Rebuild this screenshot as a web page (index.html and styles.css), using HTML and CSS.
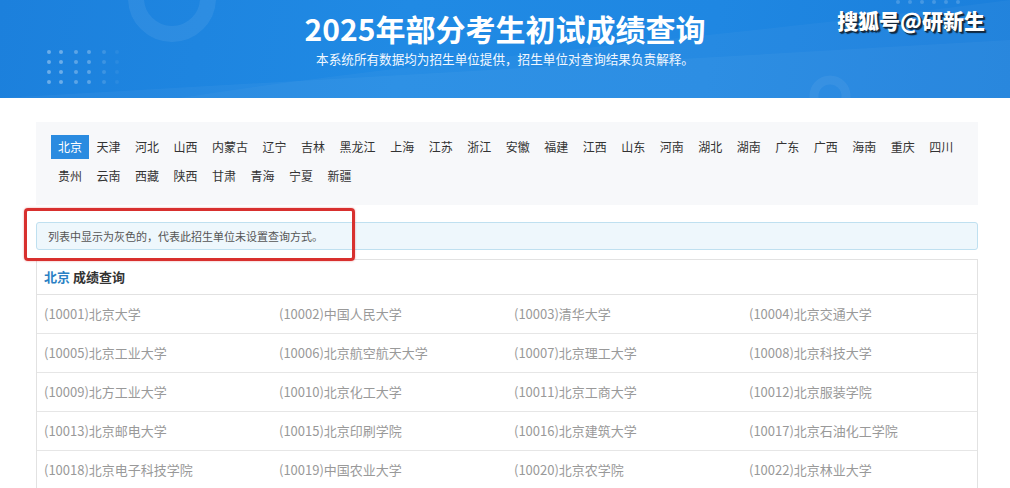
FILE: index.html
```html
<!DOCTYPE html>
<html lang="zh-CN">
<head>
  <meta charset="UTF-8" />
  <title>2025年部分考生初试成绩查询</title>
  <link rel="stylesheet" href="styles.css">
</head>
<body>

  <div class="banner">
    <svg class="banner-deco" width="1010" height="98" viewBox="0 0 1010 98">
      <path d="M0 98 L1010 40 L1010 98 Z" fill="#ffffff" fill-opacity="0.04" />
      <path d="M180 98 C420 60 700 40 1010 0 L1010 98 Z" fill="#ffffff" fill-opacity="0.03" />
      <circle cx="172" cy="-2" r="36" fill="none" stroke="#ffffff" stroke-opacity="0.07" stroke-width="16" />
      <circle cx="830" cy="96" r="16" fill="none" stroke="#ffffff" stroke-opacity="0.06" stroke-width="9" />
      <g fill="#ffffff">
        <g fill-opacity="0.35">
          <circle cx="49" cy="52" r="2" /><circle cx="49" cy="62" r="2" /><circle cx="49" cy="72" r="2" /><circle cx="49" cy="82" r="2" />
          <circle cx="61" cy="52" r="2" /><circle cx="61" cy="62" r="2" /><circle cx="61" cy="72" r="2" /><circle cx="61" cy="82" r="2" />
        </g>
        <g fill-opacity="0.28">
          <circle cx="76" cy="52" r="2" /><circle cx="76" cy="62" r="2" /><circle cx="76" cy="72" r="2" /><circle cx="76" cy="82" r="2" />
          <circle cx="89" cy="52" r="2" /><circle cx="89" cy="62" r="2" /><circle cx="89" cy="72" r="2" /><circle cx="89" cy="82" r="2" />
        </g>
        <g fill-opacity="0.14">
          <circle cx="104" cy="52" r="2" /><circle cx="104" cy="62" r="2" /><circle cx="104" cy="72" r="2" /><circle cx="104" cy="82" r="2" />
        </g>
        <g fill-opacity="0.06">
          <circle cx="117" cy="52" r="2" /><circle cx="117" cy="62" r="2" /><circle cx="117" cy="72" r="2" /><circle cx="117" cy="82" r="2" />
        </g>
        <g fill-opacity="0.18">
          <circle cx="898" cy="2" r="2" /><circle cx="910" cy="2" r="2" /><circle cx="922" cy="2" r="2" /><circle cx="934" cy="2" r="2" /><circle cx="946" cy="2" r="2" /><circle cx="958" cy="2" r="2" />
        </g>
      </g>
    </svg>
    <h1 class="banner-title">2025年部分考生初试成绩查询</h1>
    <p class="banner-sub">本系统所有数据均为招生单位提供，招生单位对查询结果负责解释。</p>
    <div class="watermark">搜狐号@研新生</div>
  </div>

  <div class="main">
    <div class="provinces">
      <a class="prov active">北京</a>
      <a class="prov">天津</a>
      <a class="prov">河北</a>
      <a class="prov">山西</a>
      <a class="prov">内蒙古</a>
      <a class="prov">辽宁</a>
      <a class="prov">吉林</a>
      <a class="prov">黑龙江</a>
      <a class="prov">上海</a>
      <a class="prov">江苏</a>
      <a class="prov">浙江</a>
      <a class="prov">安徽</a>
      <a class="prov">福建</a>
      <a class="prov">江西</a>
      <a class="prov">山东</a>
      <a class="prov">河南</a>
      <a class="prov">湖北</a>
      <a class="prov">湖南</a>
      <a class="prov">广东</a>
      <a class="prov">广西</a>
      <a class="prov">海南</a>
      <a class="prov">重庆</a>
      <a class="prov">四川</a>
      <a class="prov">贵州</a>
      <a class="prov">云南</a>
      <a class="prov">西藏</a>
      <a class="prov">陕西</a>
      <a class="prov">甘肃</a>
      <a class="prov">青海</a>
      <a class="prov">宁夏</a>
      <a class="prov">新疆</a>
    </div>

    <div class="notice-wrap">
      <div class="notice">列表中显示为灰色的，代表此招生单位未设置查询方式。</div>
      <div class="mark"></div>
    </div>

    <div class="panel">
      <div class="panel-head"><span class="blue">北京</span> 成绩查询</div>
      <div class="row">
        <span class="cell">(10001)北京大学</span>
        <span class="cell">(10002)中国人民大学</span>
        <span class="cell">(10003)清华大学</span>
        <span class="cell">(10004)北京交通大学</span>
      </div>
      <div class="row">
        <span class="cell">(10005)北京工业大学</span>
        <span class="cell">(10006)北京航空航天大学</span>
        <span class="cell">(10007)北京理工大学</span>
        <span class="cell">(10008)北京科技大学</span>
      </div>
      <div class="row">
        <span class="cell">(10009)北方工业大学</span>
        <span class="cell">(10010)北京化工大学</span>
        <span class="cell">(10011)北京工商大学</span>
        <span class="cell">(10012)北京服装学院</span>
      </div>
      <div class="row">
        <span class="cell">(10013)北京邮电大学</span>
        <span class="cell">(10015)北京印刷学院</span>
        <span class="cell">(10016)北京建筑大学</span>
        <span class="cell">(10017)北京石油化工学院</span>
      </div>
      <div class="row">
        <span class="cell">(10018)北京电子科技学院</span>
        <span class="cell">(10019)中国农业大学</span>
        <span class="cell">(10020)北京农学院</span>
        <span class="cell">(10022)北京林业大学</span>
      </div>
    </div>
  </div>

</body>
</html>
```

FILE: styles.css
```css
body {
  font-family: "Noto Sans CJK SC", "Liberation Sans", sans-serif;
  margin: 0;
  background: #fff;
  color: #333;
  overflow: hidden;
}

.banner {
  position: relative;
  height: 98px;
  background: linear-gradient(100deg, #1c80dc 0%, #208ae4 40%, #1f87e2 70%, #1b7fdb 100%);
  color: #fff;
  text-align: center;
  overflow: hidden;
}

.banner-deco {
  position: absolute;
  left: 0;
  top: 0;
}

.banner-title {
  position: relative;
  margin: 0;
  padding-top: 8px;
  font-size: 30px;
  line-height: 40px;
  font-weight: bold;
}

.banner-sub {
  position: relative;
  margin: 2px 0 0;
  font-size: 12.6px;
  line-height: 18px;
  color: #f2f8ff;
}

.watermark {
  position: absolute;
  right: 25px;
  top: 6px;
  font-size: 21px;
  font-weight: 900;
  line-height: 28px;
  color: #fff;
  text-shadow: 1px 1px 0 #18283a, 2px 2px 1px rgba(0, 0, 0, 0.7);
}

.main {
  padding: 24px 32px 0 36px;
}

.provinces {
  display: flex;
  flex-wrap: wrap;
  row-gap: 5px;
  padding: 13px 4px 17px 15px;
  background: #f7f8fa;
}

.prov {
  height: 24px;
  line-height: 24px;
  padding: 0 7px;
  margin-right: 0.5px;
  font-size: 12px;
  color: #333;
  cursor: pointer;
}

.prov.active {
  background: #2a8be0;
  color: #fff;
}

.notice-wrap {
  position: relative;
  margin-top: 17px;
}

.notice {
  height: 26px;
  line-height: 26px;
  padding-left: 11px;
  font-size: 11px;
  color: #555;
  background: #eef7fc;
  border: 1px solid #bfe0f0;
  border-radius: 3px;
}

.mark {
  position: absolute;
  left: -12px;
  top: -14px;
  width: 325px;
  height: 47px;
  border: 3px solid #d8302e;
  border-radius: 4px;
  box-shadow: 0 0 2px rgba(216, 48, 46, 0.5);
}

.panel {
  margin-top: 9px;
  border: 1px solid #e2e2e2;
  border-bottom: none;
}

.panel-head {
  height: 34px;
  line-height: 34px;
  padding-left: 7px;
  font-size: 13px;
  font-weight: bold;
  color: #333;
  border-bottom: 1px solid #e2e2e2;
}

.blue {
  color: #2a7fc4;
}

.row {
  display: grid;
  grid-template-columns: repeat(4, 1fr);
  height: 38px;
  line-height: 38px;
  border-bottom: 1px solid #e6e6e6;
}

.cell {
  padding-left: 7px;
  font-size: 13px;
  color: #999;
  white-space: nowrap;
}
```
